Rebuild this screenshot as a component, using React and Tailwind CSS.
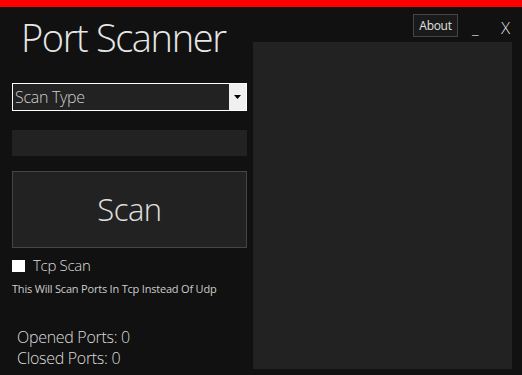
import React from 'react';

export default function App() {
  const font = { fontFamily: '"Open Sans", "Noto Sans", sans-serif' };
  return (
    <div className="w-[522px] h-[375px] bg-[#111111] flex flex-col overflow-hidden text-[#dddddd]" style={font}>
      {/* Red title strip */}
      <div className="h-[7px] bg-[#ff0000] shrink-0" />

      <div className="flex flex-1 min-h-0">
        {/* Left: controls */}
        <div className="w-[253px] shrink-0 pl-[12px] pr-[6px] flex flex-col">
          <h1 className="mt-[11px] ml-[9px] h-[38px] text-[38px] leading-none font-light tracking-[-1.4px] text-[#e6e6e6]">
            Port Scanner
          </h1>

          {/* Scan type dropdown */}
          <div className="mt-[27px] h-[28px] border border-white bg-[#222222] flex items-stretch">
            <div className="flex-1 flex items-center pl-[2px] text-[16px] font-light tracking-[-0.3px] text-[#cfcfcf]">Scan Type</div>
            <div className="w-[17px] bg-[#f0f0f0] flex items-center justify-center">
              <svg width="7" height="4" viewBox="0 0 7 4"><path d="M0 0h7L3.5 4z" fill="#000" /></svg>
            </div>
          </div>

          {/* Target input */}
          <div className="mt-[19px] h-[26px] bg-[#222222]" />

          {/* Scan button */}
          <button className="mt-[15px] h-[77px] border border-[#454545] bg-[#222222] text-[31px] font-light tracking-[-0.5px] text-[#e0e0e0] flex items-center justify-center">
            Scan
          </button>

          {/* Tcp option */}
          <div className="mt-[11px] h-[13px] flex items-center gap-[8px]">
            <div className="w-[13px] h-[12px] bg-white" />
            <span className="text-[15px] leading-[13px] font-light tracking-[-0.3px] text-[#dddddd]">Tcp Scan</span>
          </div>
          <p className="mt-[11px] text-[11px] leading-[12px] tracking-[-0.2px] text-[#cccccc]">This Will Scan Ports In Tcp Instead Of Udp</p>

          {/* Counters */}
          <div className="mt-[32px] pl-[5px] text-[16px] leading-[21px] font-light tracking-[-0.3px] text-[#dddddd]">
            <div>Opened Ports: 0</div>
            <div>Closed Ports: 0</div>
          </div>
        </div>

        {/* Right: header buttons + results panel */}
        <div className="flex-1 flex flex-col pr-[9px] pb-[6px]">
          <div className="h-[35px] shrink-0 flex items-start justify-end">
            <button className="mt-[7px] w-[45px] h-[23px] border border-[#454545] bg-[#1a1a1a] text-[12px] tracking-[-0.3px] text-[#e0e0e0] flex items-center justify-center">
              About
            </button>
            <span className="ml-[14px] mt-[13px] w-[10px] text-[16px] leading-none font-light text-[#dddddd]">_</span>
            <span className="ml-[19px] mt-[12px] w-[12px] text-[17px] leading-none font-light text-[#dddddd]">X</span>
          </div>
          <div className="flex-1 bg-[#222222] mr-[1px]" />
        </div>
      </div>
    </div>
  );
}
